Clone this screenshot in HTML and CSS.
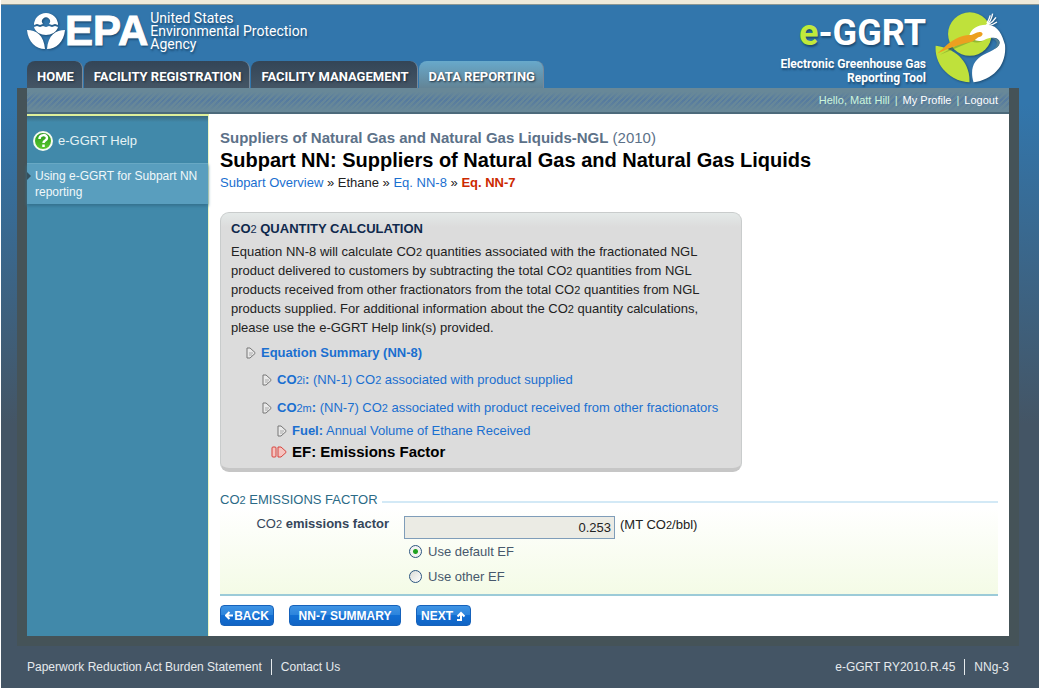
FILE: index.html
```html
<!DOCTYPE html>
<html lang="en">
<head>
<meta charset="utf-8">
<title>e-GGRT – Subpart NN: Suppliers of Natural Gas and Natural Gas Liquids</title>
<link rel="stylesheet" href="styles.css">
</head>
<body>
<div class="page">
  <header class="header">
    <div class="brand-column">
      <div class="agency">
        <svg class="agency-flower" viewBox="0 0 38 38" aria-hidden="true">
          <path d="M7 13a12 12 0 0 1 24 0l-3-1-3 1-3-1a4 4 0 1 0-6 0l-3 1-3-1z" fill="#fff"/>
          <path d="M7 15l3-1 3 1 3-1 3 1 3-1 3 1 3-1 3 1c-1 5-7 8-12 8S8 20 7 15z" fill="#fff"/>
          <path d="M0 18c9 0 17 5 18 19C9 37 1 30 0 18zM38 18c-9 0-17 5-18 19 9 0 17-7 18-19z" fill="#fff"/>
        </svg>
        <span class="agency-short">EPA</span>
        <span class="agency-name">United States<br>Environmental Protection<br>Agency</span>
      </div>
      <nav class="tabs">
        <a class="tab" href="#">HOME</a>
        <a class="tab" href="#">FACILITY REGISTRATION</a>
        <a class="tab" href="#">FACILITY MANAGEMENT</a>
        <a class="tab tab-active" href="#">DATA REPORTING</a>
      </nav>
    </div>
    <div class="product">
      <div class="product-text">
        <div class="product-name"><span class="product-e">e</span>-GGRT</div>
        <div class="product-sub">Electronic Greenhouse Gas<br>Reporting Tool</div>
      </div>
      <svg class="heron" viewBox="15 22 212 212" aria-hidden="true">
        <circle cx="119" cy="88" r="65" fill="#bfe13b"/>
        <path d="M17 123C70 130 120 165 118 232 60 230 12 180 17 123z" fill="#bfe13b"/>
        <path d="M30 150L125 110C140 116 155 112 168 102L160 92 120 98z" fill="#66922c" opacity=".5"/>
        <path d="M130 232C118 190 132 165 160 150 190 134 208 128 208 112 206 96 180 96 165 104 148 114 124 106 117 94 122 70 146 58 172 60 205 62 216 92 224 120 230 180 190 224 130 232z" fill="#fff"/>
        <path d="M182 100C198 98 210 106 207 118 203 126 198 129 192 132 204 118 202 106 182 100z" fill="#4f7f95"/>
        <path d="M168 62C178 54 184 44 187 27M174 60C186 54 192 46 197 38M170 56C174 48 178 40 180 32M178 62C188 60 194 56 200 52" fill="none" stroke="#fff" stroke-width="4"/>
        <path d="M22 146L54 117C76 101 98 90 119 91 132 91 137 81 150 82 160 84 159 92 150 96 140 97 136 107 124 111 90 118 56 130 22 146z" fill="#eca020"/>
      </svg>
    </div>
  </header>

  <div class="frame">
    <div class="userbar">
      <span class="hello">Hello, Matt Hill</span><span class="hello">|</span><a href="#">My Profile</a><span class="hello">|</span><a href="#">Logout</a>
    </div>
    <div class="columns">
      <aside class="sidebar">
        <a class="help" href="#">
          <svg class="help-icon" viewBox="0 0 22 22" aria-hidden="true">
            <defs><linearGradient id="green" x1="0" y1="0" x2="0" y2="1"><stop offset="0" stop-color="#25971c"/><stop offset="1" stop-color="#5fca2c"/></linearGradient></defs>
            <circle cx="11" cy="11" r="9" fill="url(#green)" stroke="#f4fbef" stroke-width="2"/>
            <path d="M7.500 9c0-5 7.500-5 7.500-1 0 3-3.500 2-3.500 5M11.500 14.500v2.500" fill="none" stroke="#fff" stroke-width="2.500"/>
          </svg>
          e-GGRT Help
        </a>
        <a class="topic" href="#">Using e-GGRT for Subpart NN reporting</a>
      </aside>
      <main class="main">
        <div class="facility"><strong>Suppliers of Natural Gas and Natural Gas Liquids-NGL</strong> (2010)</div>
        <h1 class="title">Subpart NN: Suppliers of Natural Gas and Natural Gas Liquids</h1>
        <nav class="crumbs"><a href="#">Subpart Overview</a> » Ethane » <a href="#">Eq. NN-8</a> » <b class="crumb-now">Eq. NN-7</b></nav>

        <section class="calc">
          <h2 class="calc-title">CO<small>2</small> QUANTITY CALCULATION</h2>
          <p class="calc-text">Equation NN-8 will calculate CO<small>2</small> quantities associated with the fractionated NGL product delivered to customers by subtracting the total CO<small>2</small> quantities from NGL products received from other fractionators from the total CO<small>2</small> quantities from NGL products supplied. For additional information about the CO<small>2</small> quantity calculations, please use the e-GGRT Help link(s) provided.</p>
          <svg width="0" height="0" class="defs" aria-hidden="true">
            <symbol id="arrow" viewBox="0 0 10 12"><path d="M1 1h3l5 4.500v1L4 11H1z" fill="#e9e9e9" stroke="#777"/><path d="M3 8h3M3 6h4" stroke="#aaa"/></symbol>
          </svg>
          <ul class="tree">
            <li class="level-1"><svg class="arrow"><use href="#arrow"/></svg><a href="#"><b>Equation Summary (NN-8)</b></a></li>
            <li class="level-2"><svg class="arrow"><use href="#arrow"/></svg><a href="#"><b>CO<small>2i</small>:</b> (NN-1) CO<small>2</small> associated with product supplied</a></li>
            <li class="level-2"><svg class="arrow"><use href="#arrow"/></svg><a href="#"><b>CO<small>2m</small>:</b> (NN-7) CO<small>2</small> associated with product received from other fractionators</a></li>
            <li class="level-3"><svg class="arrow"><use href="#arrow"/></svg><a href="#"><b>Fuel:</b> Annual Volume of Ethane Received</a></li>
            <li class="level-now"><svg class="arrow-now" viewBox="0 0 16 12" aria-hidden="true"><rect x="1" y="1" width="4" height="10" rx="1" fill="#f5c4c0" stroke="#d8433c"/><path d="M7 1h3l5 4.500v1L10 11H7z" fill="#f5c4c0" stroke="#d8433c"/></svg><b>EF: Emissions Factor</b></li>
          </ul>
        </section>

        <form class="factor">
          <h3 class="factor-title"><span>CO<small>2</small> EMISSIONS FACTOR</span></h3>
          <div class="factor-body">
            <label class="factor-label" for="ef">CO<small>2</small> <b>emissions factor</b></label>
            <div class="factor-fields">
              <div class="value-row"><input class="value" id="ef" type="text" value="0.253" readonly><span>(MT CO<small>2</small>/bbl)</span></div>
              <label class="choice"><input type="radio" name="source" checked>Use default EF</label>
              <label class="choice"><input type="radio" name="source">Use other EF</label>
            </div>
          </div>
          <div class="buttons">
            <button class="button button-back" type="button"><svg class="glyph" viewBox="0 0 8 9" aria-hidden="true"><path d="M8 4.500H2M4.500 1L1 4.500 4.500 8" fill="none" stroke="#fff" stroke-width="2"/></svg>BACK</button>
            <button class="button button-summary" type="button">NN-7 SUMMARY</button>
            <button class="button button-next" type="button">NEXT<svg class="glyph-up" viewBox="0 0 10 10" aria-hidden="true"><path d="M1 9h4V2M1.500 5.500L5 2l3.500 3.500" fill="none" stroke="#fff" stroke-width="2"/></svg></button>
          </div>
        </form>
      </main>
    </div>
  </div>

  <footer class="footer">
    <div class="footer-group"><a href="#">Paperwork Reduction Act Burden Statement</a><a href="#">Contact Us</a></div>
    <div class="footer-group"><span>e-GGRT RY2010.R.45</span><span>NNg-3</span></div>
  </footer>
</div>
</body>
</html>
```
FILE: styles.css
```css
* { box-sizing: border-box; }

body {
  margin: 0;
  padding: 0 0 1px 1px;
  background: #fff;
  font-family: "Liberation Sans", Arial, sans-serif;
  font-size: 13px;
  line-height: 16px;
  color: #222;
}

a { text-decoration: none; color: #1a6fd0; }
small { font-size: 11px; line-height: 11px; font-weight: normal; }

.page {
  display: flex;
  flex-direction: column;
  min-height: calc(100vh - 1px);
  border-top: 4px solid #eeeadb;
  background: linear-gradient(#3276ac 100px, #445565 420px);
  box-shadow: inset 0 1px #8b9794;
}

.header {
  display: flex;
  justify-content: space-between;
  padding: 0 33px 0 26px;
  height: 84px;
}

.brand-column {
  display: flex;
  flex-direction: column;
  justify-content: space-between;
}

.agency {
  display: flex;
  align-items: center;
  height: 54px;
  color: #fff;
  text-shadow: 1px 2px 2px #1d4c73;
}
.agency-flower { width: 38px; height: 38px; filter: drop-shadow(1px 1px 1px #1d4c73); }
.agency-short { font: bold 42px/54px "Liberation Sans", Arial, sans-serif; -webkit-text-stroke: 1px #fff; }
.agency-name { font: 14px/13px Roboto, sans-serif; margin-left: 2px; }

.tabs { display: flex; gap: 1px; }
.tab {
  height: 27px;
  padding: 0 8px 0 10px;
  border-radius: 8px 8px 0 0;
  border-right: 1px solid #78899a;
  background: linear-gradient(#334557, #445565);
  color: #fff;
  font: bold 13px/32px Roboto, sans-serif;
  text-shadow: 1px 1px 2px #1d2c3b;
}
.tab-active { background: linear-gradient(#68a9cb, #638496); }

.product { display: flex; gap: 9px; padding-top: 8px; }
.product-text { text-align: right; color: #fff; text-shadow: 1px 2px 2px #1d4c73; }
.product-name { font: bold 36px/42px Roboto, sans-serif; }
.product-e { color: #c1e93b; }
.product-sub { font: bold 12px/14px Roboto, sans-serif; padding-top: 3px; }
.heron { width: 71px; height: 71px; filter: drop-shadow(1px 1px 1px #1d4c73); }

.frame {
  flex: 1;
  display: flex;
  flex-direction: column;
  margin: 0 20px 0 16px;
  border: solid #455358;
  border-width: 0 10px 10px;
}

.userbar {
  display: flex;
  justify-content: flex-end;
  gap: 5px;
  height: 26px;
  padding: 0 11px;
  font-size: 11px;
  line-height: 24px;
  border-bottom: 2px solid #4c6a7b;
  background:
    linear-gradient(#688898 15%, transparent 50%, #688898 95%),
    repeating-linear-gradient(135deg, #557a9f 0 2px, #668799 2px 4px);
}
.userbar a { color: #fff; }
.userbar .hello { color: #ccf5dc; }

.columns { flex: 1; display: flex; background: #fff; }

.sidebar {
  width: 182px;
  flex: none;
  border-top: 2px solid #dff09a;
  border-right: 1px solid #edf6c4;
  background: linear-gradient(#3c6a7e, #4189aa 6px);
}
.help {
  display: flex;
  align-items: center;
  gap: 4px;
  height: 47px;
  padding: 2px 5px 0;
  color: #e6f3f5;
}
.help-icon { width: 22px; height: 22px; }
.topic {
  position: relative;
  display: block;
  padding: 4px 2px 4px 8px;
  border-top: 1px solid #68a8c4;
  background: #599ebe;
  color: #f0f8fa;
  font-size: 12px;
  box-shadow: 0 2px 3px #34718e;
}
.topic::before {
  content: "";
  position: absolute;
  left: 0;
  top: 8px;
  border: 4px solid transparent;
  border-left-color: #34515f;
  border-right: 0;
}

.main { flex: 1; min-width: 0; padding: 16px 11px 10px; }
.facility { font-size: 15px; color: #5c7188; }
.title { margin: 3px 0 4px; font-size: 20px; line-height: 22px; color: #000; }
.crumbs { font-size: 13px; }
.crumb-now { color: #cc2900; }

.calc {
  max-width: 522px;
  margin-top: 21px;
  padding: 8px 10px 4px;
  border: 1px solid #c9cccc;
  border-bottom: 4px solid #c6c6c6;
  border-radius: 9px;
  background: linear-gradient(#e4e9e8, #dcdcdc 14px);
}
.calc-title { margin: 0; font-size: 13px; line-height: 16px; color: #0f294c; }
.calc-text { margin: 5px 0 0; line-height: 19px; }
.defs { display: none; }

.tree { margin: 3px 0 0; padding: 0; list-style: none; }
.tree li { display: flex; align-items: center; gap: 5px; }
.arrow { width: 10px; height: 12px; flex: none; }
.arrow-now { width: 16px; height: 12px; flex: none; }
.tree .level-1 { height: 26px; padding-left: 15px; }
.tree .level-2 { height: 28px; padding-left: 31px; }
.tree .level-3 { height: 18px; padding-left: 46px; }
.tree .level-now { height: 24px; padding-left: 40px; font-size: 15px; color: #000; }

.factor-title {
  display: flex;
  align-items: center;
  gap: 4px;
  margin: 20px 0 0;
  font-weight: normal;
  font-size: 13px;
  color: #2b6a86;
}
.factor-title::after { content: ""; flex: 1; height: 2px; margin-top: 4px; background: #d3e9f6; }
.factor-body {
  display: flex;
  gap: 15px;
  padding: 8px 0 5px;
  border-bottom: 2px solid #9ccbd8;
  background: linear-gradient(#fff, #f4fbe6);
}
.factor-label { width: 169px; text-align: right; color: #35465a; }
.value-row { display: flex; gap: 5px; line-height: 18px; }
.value {
  width: 211px;
  height: 23px;
  padding: 0 3px;
  border: 1px solid #7f9db9;
  background: #ebebe4;
  color: #222;
  font: 13px "Liberation Sans", Arial, sans-serif;
  text-align: right;
}
.choice { display: flex; align-items: center; gap: 6px; height: 25px; padding-left: 5px; color: #47586c; }
.choice input {
  appearance: none;
  width: 13px;
  height: 13px;
  margin: 0;
  border: 1px solid #2d5580;
  border-radius: 50%;
  background: linear-gradient(135deg, #dcdcd7, #fff);
}
.choice input:checked { background: radial-gradient(circle, #21a121 0 2px, #f3f3f1 3px); }

.buttons { display: flex; gap: 15px; margin-top: 9px; }
.button {
  display: flex;
  align-items: center;
  justify-content: center;
  gap: 1px;
  height: 21px;
  padding: 0;
  border: 1px solid #1662bb;
  border-radius: 4px;
  background: linear-gradient(#3f94e4, #2b83dc 50%, #116ed3 50%, #1164c4);
  color: #fff;
  font: bold 12px/16px "Liberation Sans", Arial, sans-serif;
}
.button-back { width: 54px; }
.button-summary { width: 112px; }
.button-next { width: 55px; gap: 3px; }
.glyph { width: 8px; height: 9px; }
.glyph-up { width: 10px; height: 10px; }

.footer {
  display: flex;
  justify-content: space-between;
  align-items: center;
  height: 42px;
  padding: 0 30px 0 26px;
  color: #e6eaed;
  font-size: 12px;
}
.footer a { color: #e6eaed; }
.footer-group { display: flex; }
.footer-group > * + * { margin-left: 9px; padding-left: 9px; border-left: 1px solid #e6eaed; }
```
